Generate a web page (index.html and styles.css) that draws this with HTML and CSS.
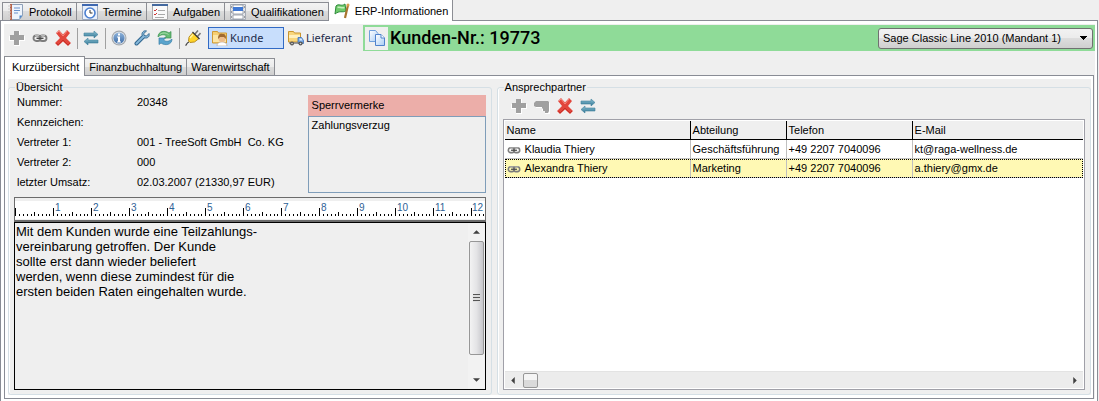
FILE: index.html
```html
<!DOCTYPE html>
<html lang="de">
<head>
    <meta charset="UTF-8">
    <meta name="viewport" content="width=device-width, initial-scale=1.0">
    <title>ERP-Informationen</title>
    <link rel="stylesheet" href="styles.css">
</head>
<body>
    <!-- Icons -->
    <svg class="sprite" aria-hidden="true">
        <defs>
            <linearGradient id="gBlue" x1="0" y1="0" x2="0" y2="1"><stop offset="0" stop-color="#8fc4d6"/><stop offset="1" stop-color="#2f7392"/></linearGradient>
            <linearGradient id="gPaper" x1="0" y1="0" x2="1" y2="1"><stop offset="0" stop-color="#ffffff"/><stop offset="1" stop-color="#a9cdf5"/></linearGradient>
            <linearGradient id="gInfo" x1="0" y1="0" x2="0" y2="1"><stop offset="0" stop-color="#8fb4dc"/><stop offset="1" stop-color="#3f6ea8"/></linearGradient>
        </defs>
        <symbol id="i-plus" viewBox="0 0 16 16">
            <path d="M5 1h6v5h5v5h-5v5H5v-5H0V6h5z" fill="#fff"/>
            <path d="M5 1h5v4h5v5h-5v5H5v-5H1V5h4z" fill="#a0a0a0"/>
        </symbol>
        <symbol id="i-link" viewBox="0 0 16 16">
            <g fill="none" stroke="#7c7c7c" stroke-width="1.800">
                <rect x="1.500" y="5.500" width="7" height="5.500" rx="2.700"/>
                <rect x="7.500" y="5.500" width="7" height="5.500" rx="2.700"/>
            </g>
            <path d="M4.500 8.300h7" stroke="#4c4c4c" stroke-width="1.400"/>
            <path d="M3 5.500h4M9 5.500h4" stroke="#b8b8b8"/>
        </symbol>
        <symbol id="i-delete" viewBox="0 0 16 16">
            <path d="M1 3l3-3 4 4.500L12 0l3 3-4 5 5 5-3 3-5-4.500L3 16l-3-3 5-5z" fill="#e2463c"/>
            <path d="M2 3l2-2 4 5 4-5" fill="none" stroke="#f58a80"/>
            <path d="M1.500 13l1.500 2 5-5 5 5 2-2" fill="none" stroke="#c62f27"/>
        </symbol>
        <symbol id="i-swap" viewBox="0 0 16 16">
            <path d="M1 3h10V1l4 3.500L11 8V6H1z" fill="url(#gBlue)" stroke="#3f7f9a" stroke-width=".6"/>
            <path d="M15 10H5V8l-4 3.500L5 15v-2h10z" fill="url(#gBlue)" stroke="#3f7f9a" stroke-width=".6"/>
        </symbol>
        <symbol id="i-info" viewBox="0 0 16 16">
            <circle cx="8" cy="8" r="7.500" fill="#a5a9ae"/>
            <circle cx="8" cy="8" r="6.300" fill="#e4e9ee"/>
            <circle cx="8" cy="8" r="5.600" fill="url(#gInfo)"/>
            <path d="M7 3.500h2v2H7zM6 6.500h3v5h1v1H6v-1h1v-4H6z" fill="#fff"/>
        </symbol>
        <symbol id="i-wrench" viewBox="0 0 16 16">
            <path d="M2.500 13.500L9 7" stroke="#30668f" stroke-width="4" stroke-linecap="round"/>
            <path d="M12.500 1C9.500 0 7.200 3 8.200 5.500l2.300 2.300C13.500 8.800 16 6.500 15 3.500L12.500 6 10 5.500 9.800 3.500z" fill="#86b8da" stroke="#30668f" stroke-width=".9"/>
            <path d="M2.500 13.500L9.500 6.500" stroke="#86b8da" stroke-width="2" stroke-linecap="round"/>
        </symbol>
        <symbol id="i-refresh" viewBox="0 0 16 16">
            <path d="M1 7C1 1 8 0 12 3l2-1.500V8H7.500l2-2C7 4 3.500 4.500 1 7z" fill="#67bc72" stroke="#3b8f52" stroke-width=".7"/>
            <path d="M15 9c0 6-7 7-11 4l-2 1.500V8h6.500l-2 2c2.500 2 6 1.500 8.500-1z" fill="#5aa4cd" stroke="#397fa8" stroke-width=".7"/>
            <path d="M3 4.500C5 2.500 9 2.500 11.500 4.500" fill="none" stroke="#a8dfae"/>
        </symbol>
        <symbol id="i-plug" viewBox="0 0 16 16">
            <path d="M.500 15.500C2 15 1 13 4 12" fill="none" stroke="#444" stroke-width="1.200"/>
            <path d="M10 4l3-3.500M12.500 6.500L15.500 3" stroke="#777" stroke-width="1.600"/>
            <path d="M4 7l4-4.500 6 6L9.500 12 5 12.500 3.500 11z" fill="#ffd42a" stroke="#a8780a" stroke-width=".8"/>
            <path d="M5 8l3-3.500" stroke="#fff3a0" stroke-width="1.400"/>
            <path d="M7.500 2l7 7" stroke="#3c3c3c" stroke-width="1.200"/>
        </symbol>
        <symbol id="i-customer" viewBox="0 0 16 16">
            <path d="M.500 1.500h5l1 1.500h8v10H.500z" fill="#f6cf72" stroke="#cf9a35"/>
            <path d="M1 5h13v7H1z" fill="#fce6a6"/>
            <path d="M5 16c0-3 2-4 5-4s5 1 5 4z" fill="#fff" stroke="#b0a090" stroke-width=".6"/>
            <circle cx="10" cy="8.500" r="3.500" fill="#eebd8c"/>
            <path d="M6.200 9C5.500 4 9 3.500 10.500 4c3 0 4 2 3.200 5L12 7H8z" fill="#a06a30"/>
        </symbol>
        <symbol id="i-truck" viewBox="0 0 16 16">
            <path d="M.500 1.500h5L6.500 3h6v9H.500z" fill="#f8d67c" stroke="#c9952f"/>
            <path d="M1 5h11v3H1z" fill="#fff0bd"/>
            <path d="M10 7.500h3.500l2 3v3H10z" fill="#6ea3e4" stroke="#3b6fb8" stroke-width=".8"/>
            <path d="M11.500 8.500h2l1 2h-3z" fill="#d9eaff"/>
            <path d="M1 13h14" stroke="#777" stroke-width="1.400"/>
            <circle cx="4" cy="13.500" r="2" fill="#555"/><circle cx="4" cy="13.500" r=".8" fill="#ddd"/>
            <circle cx="12.500" cy="13.500" r="2" fill="#555"/><circle cx="12.500" cy="13.500" r=".8" fill="#ddd"/>
        </symbol>
        <symbol id="i-copy" viewBox="0 0 16 16">
            <path d="M.500.500h6l2.500 3v8H.500z" fill="url(#gPaper)" stroke="#6f9fdc"/>
            <path d="M6.500 4.500h5.500l3.500 3.500v7.500h-9z" fill="url(#gPaper)" stroke="#4f82cc"/>
            <path d="M12 4.500V8h3.500" fill="#fff" stroke="#4f82cc"/>
        </symbol>
        <symbol id="i-hand" viewBox="0 0 16 16">
            <path d="M2 4h13l1 1v11h-5v-3H8v-3H2z" fill="#fff"/>
            <path d="M1 4l1-1h12l1 1v9l-1 2h-3v-2H9v-2l-1-1V9H2L0 8V5z" fill="#a0a0a0"/>
        </symbol>
        <symbol id="i-note" viewBox="0 0 16 16">
            <path d="M2.500.500h12v11l-3 4h-9z" fill="#eef4fc" stroke="#8ea0b8"/>
            <path d="M2 0h2v16H2z" fill="#b8644c"/>
            <path d="M0 2h3M0 5h3M0 8h3M0 11h3M0 14h3" stroke="#ccc"/>
            <path d="M6 4h6M6 6.500h6M6 9h4" stroke="#6a92cc"/>
            <path d="M11.500 15v-3.500h3z" fill="#4d86c8"/>
        </symbol>
        <symbol id="i-clock" viewBox="0 0 16 16">
            <path d="M.500.500h15v15H.500z" fill="#e9f0fb" stroke="#9aa8be"/>
            <path d="M0 0h16v2H0z" fill="#3f68b0"/>
            <circle cx="8" cy="9" r="5" fill="#fff" stroke="#4b7fd0" stroke-width="1.600"/>
            <path d="M8 6v3h2.500" fill="none" stroke="#333"/>
        </symbol>
        <symbol id="i-tasks" viewBox="0 0 16 16">
            <path d="M.500.500h15v15H.500z" fill="#fafafa" stroke="#aaa"/>
            <path d="M0 0h16v2H0z" fill="#44699f"/>
            <path d="M2 6l1 1 2-2M2 10l1 1 2-2" fill="none" stroke="#c33"/>
            <path d="M6 6.500h7M6 10.500h7M3 13.500h9" stroke="#aaa"/>
        </symbol>
        <symbol id="i-server" viewBox="0 0 16 16">
            <path d="M.500.500h15v15H.500z" fill="#e4e6ea" stroke="#a6acb6"/>
            <path d="M3 1h10v4H3zM3 6h10v4H3zM3 11h10v4H3z" fill="#fff" stroke="#8b93a0" stroke-width=".8"/>
            <path d="M3 3h10v4H3z" fill="#3f78d4"/>
            <path d="M1 3h1M1 8h1M1 13h1M14 3h1M14 8h1M14 13h1" stroke="#555"/>
        </symbol>
        <symbol id="i-flag" viewBox="0 0 16 16">
            <path d="M2 3c3-3 5 1 9-2l1 7c-4 2-6-1-11 3z" fill="#6fca6b" stroke="#2f8b3c"/>
            <path d="M3.500 4.500c2-1 4 1 7 0" fill="none" stroke="#c5f0bd" stroke-width="1.500"/>
            <path d="M14 2l-3 13" stroke="#a8742f" stroke-width="2.200"/>
            <circle cx="14" cy="2" r="1.500" fill="#d89c4b"/>
        </symbol>
    </svg>

    <!-- Hauptregister -->
    <nav class="tabs main-tabs">
        <button class="tab" type="button"><svg class="icon"><use href="#i-note"/></svg>Protokoll</button>
        <button class="tab" type="button"><svg class="icon"><use href="#i-clock"/></svg>Termine</button>
        <button class="tab" type="button"><svg class="icon"><use href="#i-tasks"/></svg>Aufgaben</button>
        <button class="tab" type="button"><svg class="icon"><use href="#i-server"/></svg>Qualifikationen</button>
        <button class="tab active" type="button"><svg class="icon"><use href="#i-flag"/></svg>ERP-Informationen</button>
    </nav>

    <main class="panel">
        <div class="panel-body">
            <div class="toolbar">
                <div class="tools">
                    <button class="tool" type="button" aria-label="Neu"><svg class="icon"><use href="#i-plus"/></svg></button>
                    <button class="tool" type="button" aria-label="Verknüpfen"><svg class="icon"><use href="#i-link"/></svg></button>
                    <button class="tool" type="button" aria-label="Löschen"><svg class="icon"><use href="#i-delete"/></svg></button>
                    <span class="sep"></span>
                    <button class="tool" type="button" aria-label="Abgleichen"><svg class="icon"><use href="#i-swap"/></svg></button>
                    <span class="sep"></span>
                    <button class="tool" type="button" aria-label="Info"><svg class="icon"><use href="#i-info"/></svg></button>
                    <button class="tool" type="button" aria-label="Einstellungen"><svg class="icon"><use href="#i-wrench"/></svg></button>
                    <button class="tool" type="button" aria-label="Aktualisieren"><svg class="icon"><use href="#i-refresh"/></svg></button>
                    <span class="sep"></span>
                    <button class="tool" type="button" aria-label="Verbinden"><svg class="icon"><use href="#i-plug"/></svg></button>
                    <button class="mode pressed" type="button" aria-pressed="true"><svg class="icon"><use href="#i-customer"/></svg>Kunde</button>
                    <button class="mode" type="button" aria-pressed="false"><svg class="icon"><use href="#i-truck"/></svg>Lieferant</button>
                </div>
                <div class="customer-bar">
                    <button class="copy" type="button" aria-label="Kopieren"><svg class="icon"><use href="#i-copy"/></svg></button>
                    <h1>Kunden-Nr.: 19773</h1>
                    <select class="mandant" aria-label="Mandant">
                        <option>Sage Classic Line 2010 (Mandant 1)</option>
                    </select>
                </div>
            </div>

            <!-- Unterregister -->
            <nav class="tabs sub-tabs">
                <button class="tab active" type="button">Kurzübersicht</button>
                <button class="tab" type="button">Finanzbuchhaltung</button>
                <button class="tab" type="button">Warenwirtschaft</button>
            </nav>

            <div class="subpanel">
                <fieldset class="group">
                    <legend>Übersicht</legend>
                    <div class="overview">
                        <dl class="facts">
                            <dt>Nummer:</dt><dd>20348</dd>
                            <dt>Kennzeichen:</dt><dd></dd>
                            <dt>Vertreter 1:</dt><dd>001 - TreeSoft GmbH&nbsp; Co. KG</dd>
                            <dt>Vertreter 2:</dt><dd>000</dd>
                            <dt>letzter Umsatz:</dt><dd>02.03.2007 (21330,97 EUR)</dd>
                        </dl>
                        <section class="locks">
                            <h2>Sperrvermerke</h2>
                            <ul>
                                <li>Zahlungsverzug</li>
                            </ul>
                        </section>
                    </div>

                    <div class="ruler">
                        <svg class="scale">
                            <defs>
                                <pattern id="cm" width="38" height="16" patternUnits="userSpaceOnUse">
                                    <path d="M.5 7v8M4.500 13v2M8.500 13v2M12.500 13v2M16.500 13v2M19.500 11v4M23.500 13v2M27.500 13v2M31.500 13v2M34.500 13v2" stroke="#000"/>
                                </pattern>
                            </defs>
                            <rect width="100%" height="16" fill="url(#cm)"/>
                            <text x="40" y="10">1</text>
                            <text x="78" y="10">2</text>
                            <text x="116" y="10">3</text>
                            <text x="154" y="10">4</text>
                            <text x="192" y="10">5</text>
                            <text x="230" y="10">6</text>
                            <text x="268" y="10">7</text>
                            <text x="306" y="10">8</text>
                            <text x="344" y="10">9</text>
                            <text x="382" y="10">10</text>
                            <text x="420" y="10">11</text>
                            <text x="457" y="10">12</text>
                        </svg>
                    </div>

                    <div class="memo">
                        <textarea aria-label="Bemerkung" readonly>Mit dem Kunden wurde eine Teilzahlungs-
vereinbarung getroffen. Der Kunde
sollte erst dann wieder beliefert
werden, wenn diese zumindest für die
ersten beiden Raten eingehalten wurde.</textarea>
                        <div class="vscroll">
                            <svg class="arrow" viewBox="0 0 8 4"><path d="M0 4l4-4 4 4z"/></svg>
                            <div class="track"><div class="thumb"><span class="grip"></span></div></div>
                            <svg class="arrow" viewBox="0 0 8 4"><path d="M0 0l4 4 4-4z"/></svg>
                        </div>
                    </div>
                </fieldset>

                <fieldset class="group">
                    <legend>Ansprechpartner</legend>
                    <div class="contact-tools">
                        <button class="tool" type="button" aria-label="Neu"><svg class="icon"><use href="#i-plus"/></svg></button>
                        <button class="tool" type="button" aria-label="Zuordnen"><svg class="icon"><use href="#i-hand"/></svg></button>
                        <button class="tool" type="button" aria-label="Löschen"><svg class="icon"><use href="#i-delete"/></svg></button>
                        <button class="tool" type="button" aria-label="Abgleichen"><svg class="icon"><use href="#i-swap"/></svg></button>
                    </div>
                    <div class="grid-box">
                        <table class="contacts">
                            <colgroup>
                                <col class="c-name"><col class="c-dept"><col class="c-phone"><col>
                            </colgroup>
                            <thead>
                                <tr><th>Name</th><th>Abteilung</th><th>Telefon</th><th>E-Mail</th></tr>
                            </thead>
                            <tbody>
                                <tr>
                                    <td><svg class="icon"><use href="#i-link"/></svg>Klaudia Thiery</td>
                                    <td>Geschäftsführung</td><td>+49 2207 7040096</td><td>kt@raga-wellness.de</td>
                                </tr>
                                <tr class="selected">
                                    <td><svg class="icon"><use href="#i-link"/></svg>Alexandra Thiery</td>
                                    <td>Marketing</td><td>+49 2207 7040096</td><td>a.thiery@gmx.de</td>
                                </tr>
                            </tbody>
                        </table>
                        <div class="hscroll">
                            <svg class="arrow" viewBox="0 0 4 8"><path d="M4 0L0 4l4 4z"/></svg>
                            <div class="thumb"></div>
                            <svg class="arrow last" viewBox="0 0 4 8"><path d="M0 0l4 4-4 4z"/></svg>
                        </div>
                    </div>
                </fieldset>
            </div>
        </div>
    </main>
</body>
</html>
```

FILE: styles.css
```css
* {
    box-sizing: border-box;
}
body {
    display: flex;
    flex-direction: column;
    height: 100vh;
    margin: 0;
    background: #efefef;
    color: #000;
    font-family: "Liberation Sans", Arial, sans-serif;
    font-size: 11px;
    line-height: 14px;
}
button, select, textarea {
    margin: 0;
    font: inherit;
    color: inherit;
}
.sprite {
    display: block;
    width: 0;
    height: 0;
}
.icon {
    flex: none;
    width: 16px;
    height: 16px;
}

/* Register */
.tabs {
    display: flex;
    align-items: flex-end;
}
.tab {
    display: flex;
    align-items: center;
    padding: 0 4px;
    border: 1px solid #8c8e94;
    border-left-width: 0;
    border-bottom: 0;
    background: linear-gradient(#f3f3f3, #ebebeb 50%, #dcdcdc 50%, #cfcfcf);
    white-space: nowrap;
}
.tab:first-child {
    border-left-width: 1px;
}
.tab.active {
    background: #fff;
}
.main-tabs {
    height: 20px;
    padding-left: 2px;
}
.main-tabs .tab {
    height: 18px;
    gap: 5px;
    padding-left: 5px;
}
.main-tabs .tab.active {
    position: relative;
    height: 21px;
    margin-bottom: -1px;
    border-top: 0;
}
.sub-tabs .tab {
    height: 17px;
}
.sub-tabs .tab.active {
    position: relative;
    height: 20px;
    margin-bottom: -1px;
    padding: 0 5px 0 7px;
}

.panel {
    display: flex;
    flex: 1;
    min-height: 0;
    margin-right: 1px;
    padding: 3px 2px 2px 3px;
    border: 1px solid #898c95;
    border-bottom: 0;
    background: #fff;
}
.panel-body {
    display: flex;
    flex: 1;
    flex-direction: column;
    min-width: 0;
    background: #efefef;
}

/* Werkzeugleiste */
.toolbar {
    display: flex;
    padding-top: 1px;
    margin-bottom: 5px;
}
.tools {
    display: flex;
    align-items: center;
    width: 359px;
    padding-left: 5px;
}
.tool {
    display: flex;
    padding: 0;
    border: 0;
    background: none;
}
.tools .tool {
    margin-right: 7px;
}
.sep {
    width: 1px;
    height: 21px;
    margin: 0 5px 0 -1px;
    background: #a0a0a0;
}
.mode {
    display: flex;
    align-items: center;
    gap: 2px;
    height: 22px;
    padding: 0 3px;
    border: 1px solid transparent;
    background: none;
    color: #1e2b4a;
    font-family: "Noto Sans", sans-serif;
}
.mode.pressed {
    width: 76px;
    border-color: #316ac5;
    background: #c8defc;
}
.customer-bar {
    display: flex;
    flex: 1;
    align-items: center;
    height: 26px;
    padding: 0 2px 0 2px;
    background: #8fdb98;
}
.copy {
    display: flex;
    align-items: center;
    justify-content: center;
    width: 23px;
    height: 23px;
    padding: 0;
    border: 0;
    background: #efefef;
}
.customer-bar h1 {
    flex: 1;
    margin: 0 0 0 2px;
    font-family: Roboto, sans-serif;
    font-size: 18px;
    font-weight: 500;
    line-height: 24px;
}
.mandant {
    width: 215px;
    height: 21px;
    padding: 0 4px;
    border: 1px solid #707070;
    border-radius: 3px;
    appearance: none;
    background:
        linear-gradient(to bottom right, #000 50%, transparent 50%) right 4px center / 4px 4px no-repeat,
        linear-gradient(to bottom left, #000 50%, transparent 50%) right 8px center / 4px 4px no-repeat,
        linear-gradient(#f2f2f2, #ebebeb 50%, #dddddd 50%, #cfcfcf);
}

.subpanel {
    display: grid;
    flex: 1;
    grid-template-columns: 484fr 595fr;
    gap: 5px;
    min-height: 0;
    margin-right: 1px;
    padding: 3px 2px 3px 3px;
    border: 1px solid #898c95;
    background: linear-gradient(#efefef, #efefef) content-box, #fff;
}
.group {
    display: flex;
    flex-direction: column;
    min-width: 0;
    min-height: 0;
    margin: 2px 0 0;
    padding: 0 5px 4px;
    border: 1px solid #d5dfe5;
    border-radius: 3px;
    box-shadow: inset 1px 0 #fff;
}
.group legend {
    margin-left: 1px;
    padding: 0 1px;
    line-height: 12px;
}

/* Übersicht */
.overview {
    display: flex;
    justify-content: space-between;
    margin-bottom: 4px;
}
.facts {
    display: grid;
    grid-template-columns: 120px auto;
    grid-auto-rows: 20px;
    margin: 0;
    padding-left: 3px;
    line-height: 18px;
    white-space: nowrap;
}
.facts dd {
    margin: 0;
}
.locks {
    display: flex;
    flex-direction: column;
    width: 178px;
    padding-top: 2px;
}
.locks h2 {
    margin: 0;
    padding: 0 4px;
    background: #ecaea9;
    font-size: 11px;
    font-weight: normal;
    line-height: 21px;
}
.locks ul {
    flex: 1;
    margin: 0;
    padding: 1px 3px;
    border: 1px solid #7f9db9;
    list-style: none;
}

.ruler {
    height: 25px;
    padding: 3px 0;
    border: 1px solid #6b6b6b;
    border-bottom-width: 2px;
}
.scale {
    display: block;
    width: 100%;
    height: 18px;
    background: #fff;
}
.scale text {
    fill: #2f6296;
    font-size: 10px;
}
.memo {
    display: flex;
    flex: 1;
    min-height: 0;
    border: 1px solid #000;
}
.memo textarea {
    flex: 1;
    min-width: 0;
    padding: 1px;
    border: 0;
    outline: 0;
    resize: none;
    background: #efefef;
    font-size: 13px;
    line-height: 15px;
}

/* Bildlaufleisten */
.arrow {
    display: block;
    fill: #404040;
}
.vscroll {
    display: flex;
    flex-direction: column;
    align-items: center;
    width: 17px;
    padding: 7px 1px;
    background: #f2f2f2;
}
.vscroll .arrow {
    width: 7px;
    height: 4px;
}
.track {
    flex: 1;
    width: 15px;
    padding: 7px 0;
}
.track .thumb {
    display: flex;
    align-items: center;
    justify-content: center;
    height: 88%;
    background: linear-gradient(to right, #f3f3f3, #e4e4e6 50%, #c8c8cc);
}
.thumb {
    border: 1px solid #979797;
    border-radius: 2px;
}
.grip {
    width: 7px;
    height: 8px;
    background: repeating-linear-gradient(#555 0 1px, #ddd 1px 3px);
}
.hscroll {
    display: flex;
    align-items: center;
    height: 17px;
    padding: 0 6px;
    border-top: 1px solid #e3e3e3;
    background: #ececec;
}
.hscroll .arrow {
    width: 4px;
    height: 7px;
}
.hscroll .thumb {
    width: 15px;
    height: 15px;
    margin-left: 8px;
    background: linear-gradient(#f5f5f5 50%, #dadada 50%);
}
.hscroll .last {
    margin-left: auto;
}

/* Ansprechpartner */
.contact-tools {
    display: flex;
    align-items: center;
    gap: 7px;
    height: 26px;
    padding-left: 8px;
}
.grid-box {
    display: flex;
    flex: 1;
    flex-direction: column;
    justify-content: space-between;
    min-height: 0;
    padding: 1px;
    border: 1px solid #a0a0a8;
    background: #fff;
}
.contacts {
    width: 100%;
    border-spacing: 0;
    table-layout: fixed;
}
.c-name {
    width: 186px;
}
.c-dept {
    width: 96px;
}
.c-phone {
    width: 126px;
}
.contacts th,
.contacts td {
    height: 19px;
    padding: 0 2px;
    border-right: 1px solid #c0c0c0;
    border-bottom: 1px solid #c0c0c0;
    text-align: left;
    white-space: nowrap;
    overflow: hidden;
}
.contacts th {
    border-right-color: #000;
    border-bottom-color: #000;
    background: #efefef;
    font-weight: normal;
}
.contacts th:last-child,
.contacts td:last-child {
    border-right: 0;
}
.contacts .icon {
    width: 14px;
    height: 14px;
    margin-right: 4px;
    vertical-align: -4px;
}
.contacts .selected {
    outline: 1px dotted #000;
    outline-offset: -1px;
}
.contacts .selected td {
    background: #fff9b4;
}
```
